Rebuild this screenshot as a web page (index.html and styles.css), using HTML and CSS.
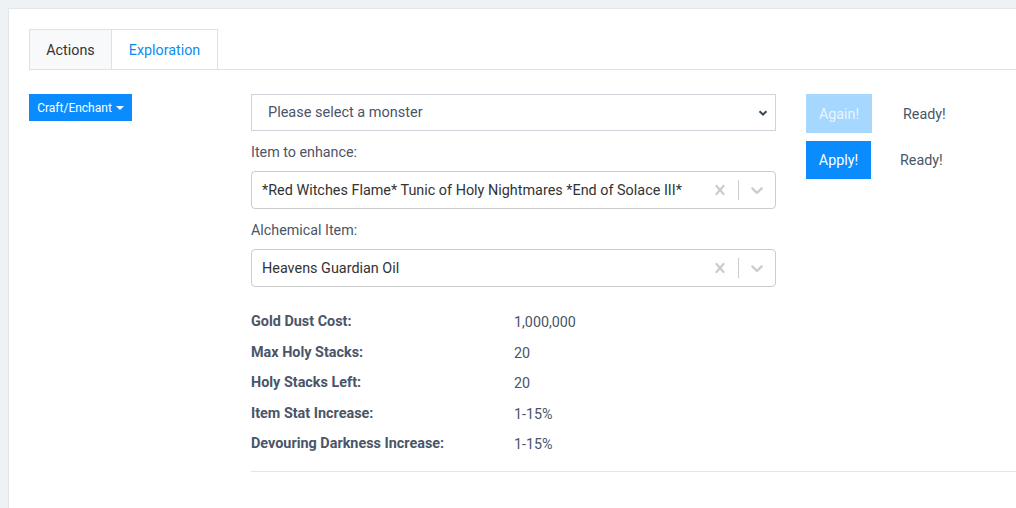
FILE: index.html
```html
<!DOCTYPE html>
<html>
<head>
<meta charset="utf-8">
<link rel="stylesheet" href="styles.css">
</head>
<body>
<div class="card">
  <div class="tabs">
    <div class="tab active">Actions</div>
    <div class="tab link">Exploration</div>
    <div class="tab-fill"></div>
  </div>
  <div class="content">
    <div class="left">
      <button class="craft-btn">Craft/Enchant <span class="caret"></span></button>
    </div>
    <div class="main">
      <div class="form-row">
        <div class="form">
          <div class="native-select">
            <span>Please select a monster</span>
            <svg width="12" height="12" viewBox="0 0 12 12"><path d="M2.5 4.3 L6 7.6 L9.5 4.3" fill="none" stroke="#3f4a56" stroke-width="2"/></svg>
          </div>
          <div class="label">Item to enhance:</div>
          <div class="rselect">
            <div class="rvalue">*Red Witches Flame* Tunic of Holy Nightmares *End of Solace III*</div>
            <div class="rind"><svg height="20" width="20" viewBox="0 0 20 20"><path d="M14.348 14.849c-0.469 0.469-1.229 0.469-1.697 0l-2.651-3.030-2.651 3.029c-0.469 0.469-1.229 0.469-1.697 0-0.469-0.469-0.469-1.229 0-1.697l2.758-3.15-2.759-3.152c-0.469-0.469-0.469-1.228 0-1.697s1.228-0.469 1.697 0l2.652 3.031 2.651-3.031c0.469-0.469 1.228-0.469 1.697 0s0.469 1.229 0 1.697l-2.758 3.152 2.758 3.15c0.469 0.469 0.469 1.229 0 1.698z"/></svg></div>
            <span class="rsep"></span>
            <div class="rind"><svg height="20" width="20" viewBox="0 0 20 20"><path d="M4.516 7.548c0.436-0.446 1.043-0.481 1.576 0l3.908 3.747 3.908-3.747c0.533-0.481 1.141-0.446 1.574 0 0.436 0.445 0.408 1.197 0 1.615-0.406 0.418-4.695 4.502-4.695 4.502-0.217 0.223-0.502 0.335-0.787 0.335s-0.57-0.112-0.789-0.335c0 0-4.287-4.084-4.695-4.502s-0.436-1.17 0-1.615z"/></svg></div>
          </div>
          <div class="label">Alchemical Item:</div>
          <div class="rselect">
            <div class="rvalue">Heavens Guardian Oil</div>
            <div class="rind"><svg height="20" width="20" viewBox="0 0 20 20"><path d="M14.348 14.849c-0.469 0.469-1.229 0.469-1.697 0l-2.651-3.030-2.651 3.029c-0.469 0.469-1.229 0.469-1.697 0-0.469-0.469-0.469-1.229 0-1.697l2.758-3.15-2.759-3.152c-0.469-0.469-0.469-1.228 0-1.697s1.228-0.469 1.697 0l2.652 3.031 2.651-3.031c0.469-0.469 1.228-0.469 1.697 0s0.469 1.229 0 1.697l-2.758 3.152 2.758 3.15c0.469 0.469 0.469 1.229 0 1.698z"/></svg></div>
            <span class="rsep"></span>
            <div class="rind"><svg height="20" width="20" viewBox="0 0 20 20"><path d="M4.516 7.548c0.436-0.446 1.043-0.481 1.576 0l3.908 3.747 3.908-3.747c0.533-0.481 1.141-0.446 1.574 0 0.436 0.445 0.408 1.197 0 1.615-0.406 0.418-4.695 4.502-4.695 4.502-0.217 0.223-0.502 0.335-0.787 0.335s-0.57-0.112-0.789-0.335c0 0-4.287-4.084-4.695-4.502s-0.436-1.17 0-1.615z"/></svg></div>
          </div>
        </div>
        <div class="actions">
          <div class="action-row">
            <button class="btn btn-disabled">Again!</button>
            <span class="ready">Ready!</span>
          </div>
          <div class="action-row second">
            <button class="btn btn-primary">Apply!</button>
            <span class="ready">Ready!</span>
          </div>
        </div>
      </div>
      <dl class="stats">
        <dt>Gold Dust Cost:</dt><dd>1,000,000</dd>
        <dt>Max Holy Stacks:</dt><dd>20</dd>
        <dt>Holy Stacks Left:</dt><dd>20</dd>
        <dt>Item Stat Increase:</dt><dd>1-15%</dd>
        <dt>Devouring Darkness Increase:</dt><dd>1-15%</dd>
      </dl>
      <hr class="rule">
    </div>
  </div>
</div>
</body>
</html>
```

FILE: styles.css
```css
html, body {
  margin: 0;
  padding: 0;
}
body {
  background: #eef2f5;
  font-family: Roboto, "Liberation Sans", sans-serif;
  font-size: 14px;
  color: #4a5568;
  overflow: hidden;
  width: 1016px;
  height: 508px;
}
.card {
  margin: 8px 0 0 8px;
  width: 1080px;
  height: 600px;
  background: #fff;
  border: 1px solid #e2e6ea;
  padding: 20px;
  box-sizing: border-box;
}
.tabs {
  display: flex;
  height: 40px;
  border-bottom: 1px solid #dee2e6;
}
.tab {
  box-sizing: border-box;
  height: 41px;
  margin-bottom: -1px;
  border: 1px solid #dee2e6;
  display: flex;
  align-items: center;
  justify-content: center;
  font-size: 14.3px;
}
.tab.active {
  width: 83px;
  background: #f8f9fa;
  color: #333;
}
.tab.link {
  width: 106px;
  border-left: none;
  color: #0a8cf5;
  background: #fff;
}
.tab-fill { flex: 1; }
.content {
  display: flex;
  padding-top: 24px;
}
.left {
  width: 222px;
  flex: none;
}
.craft-btn {
  background: #0a8cff;
  color: #fff;
  border: none;
  font-family: Roboto, "Liberation Sans", sans-serif;
  font-size: 12px;
  height: 27px;
  width: 103px;
  padding: 0;
  display: flex;
  align-items: center;
  justify-content: center;
  gap: 4px;
}
.caret {
  display: inline-block;
  width: 0;
  height: 0;
  border-left: 4px solid transparent;
  border-right: 4px solid transparent;
  border-top: 4px solid #fff;
}
.main {
  flex: 1;
}
.form-row {
  display: flex;
  gap: 30px;
}
.form {
  width: 525px;
  flex: none;
}
.native-select {
  box-sizing: border-box;
  height: 37px;
  border: 1px solid #ced4da;
  display: flex;
  align-items: center;
  justify-content: space-between;
  padding: 0 6px 0 16px;
  font-size: 14.5px;
  color: #4a5568;
}
.label {
  margin: 10px 0 0;
  height: 30px;
  line-height: 22px;
  font-size: 14.3px;
  color: #4a5568;
}
.rselect {
  box-sizing: border-box;
  height: 38px;
  border: 1px solid #ccc;
  border-radius: 4px;
  display: flex;
  align-items: center;
}
.rvalue {
  flex: 1;
  padding-left: 10px;
  color: #333;
  font-size: 14.4px;
  white-space: nowrap;
  overflow: hidden;
}
.rind {
  padding: 8px;
  display: flex;
  fill: #ccc;
}
.rsep {
  align-self: stretch;
  width: 1px;
  margin: 8px 0;
  background: #ccc;
}
.actions {
  display: flex;
  flex-direction: column;
}
.action-row {
  display: flex;
  align-items: center;
}
.action-row.second {
  margin-top: 8px;
}
.btn {
  border: none;
  color: #fff;
  font-family: Roboto, "Liberation Sans", sans-serif;
  font-size: 14.3px;
  padding: 0;
}
.btn-disabled {
  background: #a5d7ff;
  width: 66px;
  height: 39px;
  color: #eaf5ff;
}
.btn-primary {
  background: #0a8cff;
  width: 65px;
  height: 38px;
}
.ready {
  margin-left: 31px;
  color: #4a5568;
  font-size: 14.3px;
}
.second .ready {
  margin-left: 29px;
}
.stats {
  display: grid;
  grid-template-columns: 263px 1fr;
  grid-auto-rows: 30.5px;
  margin: 0;
  padding-top: 25px;
}
.stats dt {
  font-weight: bold;
  font-size: 14.4px;
  color: #4a5568;
  line-height: 20px;
}
.stats dd {
  margin: 0;
  font-size: 14.3px;
  color: #4a5568;
  line-height: 20px;
}
.rule {
  border: none;
  border-top: 1px solid #e2e6ea;
  margin: 6px 0 0;
}
```
